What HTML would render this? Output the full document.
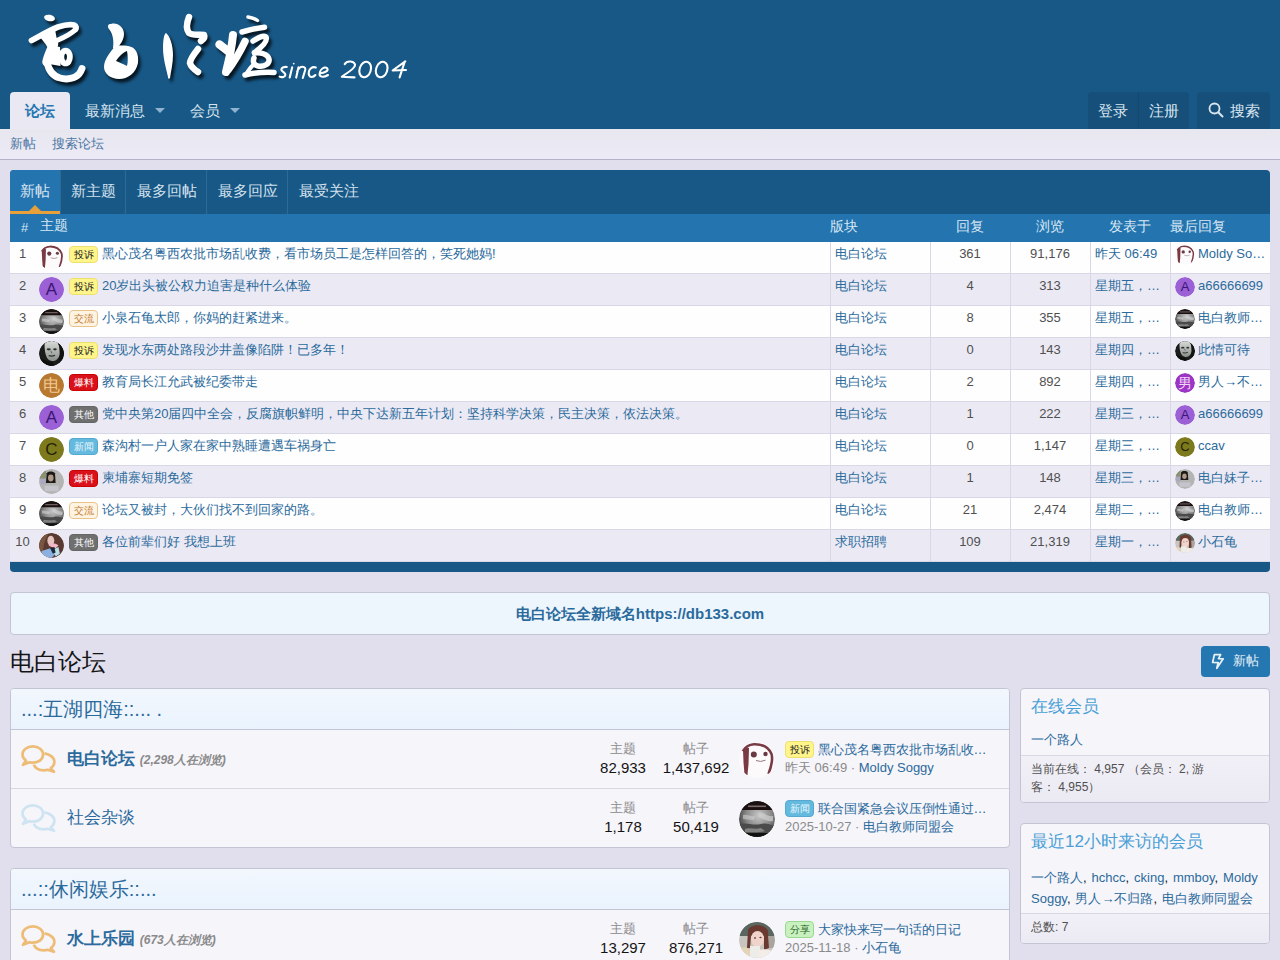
<!DOCTYPE html>
<html><head><meta charset="utf-8"><style>

*{box-sizing:border-box;margin:0;padding:0}
html,body{width:1280px;height:960px;overflow:hidden}
body{font-family:"Liberation Sans",sans-serif;background:#e1dfee;color:#141414;font-size:15px;line-height:1.4;position:relative}
a{color:#2b6a9c;text-decoration:none}
.abs{position:absolute}
#hdr{position:absolute;left:0;top:0;width:1280px;height:129px;background:#185886}
#logo{position:absolute;left:0;top:0}
.navtab{position:absolute;top:92px;height:37px;line-height:37px;font-size:15px;color:#d5e4f0}
.navtab.sel{background:#e9e8f3;color:#2577b1;font-weight:bold;border-radius:4px 4px 0 0}
.caret{display:inline-block;width:0;height:0;border-left:5px solid transparent;border-right:5px solid transparent;border-top:5px solid #8fb3d1;vertical-align:middle;margin-left:10px;position:relative;top:-2px}
.navbtn{position:absolute;top:92px;height:37px;line-height:37px;background:#164f7a;color:#d9e6f0;font-size:15px;text-align:center;border-radius:4px 4px 0 0}
#subnav{position:absolute;left:0;top:129px;width:1280px;height:31px;background:linear-gradient(#e8e7ef,#eceaf6);border-bottom:1px solid #b4b2c6}
#subnav a{position:absolute;top:6px;font-size:13px;color:#4a76a2}
/* block tabs */
#bt{position:absolute;left:10px;top:170px;width:1260px;height:402px;background:#185886;border-radius:4px}
.btab{position:absolute;top:0;height:44px;line-height:42px;font-size:15px;color:#d5e2ee;border-right:1px solid #2d6a96}
.btab.sel{background:#2474b0;border-radius:4px 0 0 0}
#thead{position:absolute;left:0;top:44px;width:1260px;height:28px;background:#2474b0;color:#d9e8f3;font-size:14px}
#thead span{position:absolute;top:2px}
.row{position:absolute;left:0;width:1260px;height:32px;font-size:13px;border-bottom:1px solid #d8d7e6}
.row.w{background:#fefefe}
.row.g{background:#ebeaf4}
.row .c{position:absolute;top:0;height:31px;border-left:1px solid #d8d7e6}
.num{position:absolute;left:0;width:25px;text-align:center;top:3px;color:#505050;font-size:13px}
.av{position:absolute;left:29px;top:3px;width:25px;height:25px;border-radius:50%;overflow:hidden;text-align:center;line-height:24px;font-size:16px}
.lbl{position:absolute;left:59px;top:4px;height:17px;line-height:15px;width:29px;text-align:center;font-size:10px;font-weight:500;border-radius:4px;border:1px solid transparent}
.ttl{position:absolute;left:92px;top:3px;color:#2b6a9c;font-size:13px;white-space:nowrap}
.forum{position:absolute;left:825px;top:3px;width:95px}
.rep{position:absolute;left:920px;width:80px;text-align:center;top:3px;color:#505050}
.vw{position:absolute;left:1000px;width:80px;text-align:center;top:3px;color:#505050}
.dt{position:absolute;left:1085px;top:3px;color:#2b6a9c}
.lr{position:absolute;left:1165px;top:4px;width:96px;white-space:nowrap;overflow:hidden}
.lrav{position:absolute;left:1165px;top:3px;width:20px;height:20px;border-radius:50%;overflow:hidden;text-align:center;line-height:20px;font-size:13px}
.lrn{position:absolute;left:1188px;top:3px;color:#2b6a9c;white-space:nowrap}
.y{background:#fff58a;border-color:#eee070;color:#222}
.o{background:#fff4e4;border-color:#e8c48c;color:#c27a2a}
.r{background:#d9111a;border-color:#c00;color:#fff}
.gy{background:#6f6f6f;border-color:#666;color:#fff}
.bl{background:#64b9de;border-color:#55a9d0;color:#e8f6fd}
.gr{background:#c9f1c0;border-color:#9ad88f;color:#1f5e1a}
#notice{position:absolute;left:10px;top:592px;width:1260px;height:43px;background:#edf5fd;border:1px solid #c3c4d4;border-radius:4px;text-align:center;line-height:41px;font-size:15px;font-weight:bold;color:#2b6a9c}
#ptitle{position:absolute;left:10px;top:645px;font-size:24px;color:#141414;line-height:34px}
#newbtn{position:absolute;left:1201px;top:646px;width:69px;height:31px;background:#2577b1;border-radius:4px;color:#e6f0f8;font-size:13px;line-height:31px}
.blk{position:absolute;background:#f6f5fa;border:1px solid #c3c4d4;border-radius:4px;overflow:hidden}
.bhead{position:absolute;left:0;top:0;width:100%;height:41px;background:linear-gradient(#f2f7fd,#eaf3fd);border-bottom:1px solid #c3c4d4;color:#2b6a9c;font-size:20px;line-height:40px;padding-left:10px}
.node{position:absolute;left:0;width:100%;height:59px;border-bottom:1px solid #d8d7e6}
.nname{position:absolute;left:56px;top:18px;font-size:17px;line-height:22px;color:#2b6a9c}
.nname b{font-weight:bold}
.nview{font-size:12px;color:#8a8a8a;font-style:italic;font-weight:bold}
.slab{position:absolute;width:80px;text-align:center;font-size:13px;color:#8a8a8a;top:10px}
.sval{position:absolute;width:90px;text-align:center;font-size:15px;color:#141414;top:27px}
.lpav{position:absolute;left:728px;top:12px;width:36px;height:36px;border-radius:50%;overflow:hidden}
.lpt{position:absolute;left:774px;top:11px;font-size:13px;line-height:18px;white-space:nowrap;color:#2b6a9c}
.lpm{position:absolute;left:774px;top:29px;font-size:13px;line-height:18px;white-space:nowrap;color:#8a8a8a}
.sbh{position:absolute;left:10px;top:6px;font-size:17px;color:#4aa0d6;line-height:24px}

.tri{position:absolute;left:19px;bottom:3px;width:0;height:0;border-left:6px solid transparent;border-right:6px solid transparent;border-bottom:6px solid #e8a13a}
.btab.sel{box-shadow:inset 0 -3px 0 #e8a13a}
.sbf{position:absolute;left:0;width:100%;border-top:1px solid #d8d7e6;background:linear-gradient(#f1f0f7,#ebeaf3);font-size:12px;color:#505050;padding:5px 10px;line-height:17.5px}

.cm{margin-right:1.3px}

</style></head><body>
<div id="hdr">
  <div id="logo"><svg width="420" height="92" viewBox="0 0 420 92" style="position:absolute;left:0;top:0">
<defs><filter id="sh" x="-10%" y="-10%" width="120%" height="130%"><feGaussianBlur stdDeviation="1.6"/></filter>
<g id="lg">
<g fill="#fff">
<ellipse cx="49.5" cy="18" rx="5.5" ry="3.2" transform="rotate(12 49.5 18)"/>
<path d="M111,24 C117,22 124,27 124,34 C124,40 120,45 117,48 L113,48 C114,41 113,34 109,29 C107,26 108,24 111,24Z"/>
<path fill-rule="evenodd" d="M116,45 C110,52 104,60 104,67 C104,74 111,79 119,79 C128,79 136,73 138,63 C139,54 136,47 128,46 C123,45 119,46 116,45Z M116,61 C119,56 124,52 127,51 C128,56 128,62 127,66 C123,64 119,62 116,61Z"/>
<path d="M166,33 C170,36 173,45 173,55 C173,63 171,71 170,78 C169,79 168,79 168,77 C166,68 163,58 163,48 C163,40 164,34 166,33Z"/>
</g>
<g fill="none" stroke="#fff" stroke-linecap="round" stroke-linejoin="round">
<path d="M31.5,40.5 C40,36 50,30 58,27 C64,25 70,24 74,25 C76.5,26 76.5,28 75.5,29.5" stroke-width="5.8"/>
<path d="M75.5,29.5 C72,33 65,37 58,40 C54,42 51,43.5 49,45" stroke-width="5"/>
<path d="M53.5,44 C51.5,50 48,56 47,62" stroke-width="9.5"/>
<ellipse cx="65.6" cy="57" rx="4.3" ry="6.4" stroke-width="5.8"/>
<path d="M40,37 L55,29.5 L57,40 L47,46Z M50,45 L60,47 L60.5,66 L49,64Z" fill="#fff" stroke="none"/>
<path d="M47,62 C48.5,70 53,76 60,78 C67,80 75,78.5 79,74 C80.5,72 81.5,70 82,68.5" stroke-width="7"/>


<path d="M189,17 C187,22 186,29 189,33 C193,36 200,34 204,35 C205,37 204,39 201,41" stroke-width="6.5"/>
<path d="M198,49 C194,54 190,59 190,63 C191,67 195,70 198,72" stroke-width="6.5"/>
<path d="M248,17 C251,17.5 255,18.5 257.5,20.5" stroke-width="3.5"/>
<path d="M242,32 C249,30 257,28 264.5,27.2" stroke-width="5.5"/>
<path d="M219.5,44.5 L228.5,51.5" stroke-width="8.5"/>
<path d="M233,35 C232,46 229,60 226,72" stroke-width="8"/>
<path d="M245,41.5 C240,52 234,62 228,70" stroke-width="7.5"/>
<path d="M253,41 C258,38 263,35 266,37 C268,41 262,47 254.5,52.5" stroke-width="5.5"/>
<path d="M254.5,53 C260,52 268,54 269,59 C270,64 264,67 258,66 C254,65 252.5,62 254,58" stroke-width="5.5"/>
<path d="M253,65 C250,68 248,71 246,74" stroke-width="4"/>
<path d="M245,75 C253,73 263,72 274,72.5" stroke-width="5.5"/>
</g>

</g></defs>
<use href="#lg" x="2.5" y="3.5" opacity="0.75" style="filter:url(#sh) brightness(0)"/>
<use href="#lg"/>
<g fill="none" stroke="#fff" stroke-width="2.1" stroke-linecap="round" stroke-linejoin="round">
<path d="M286.8,67 C285,66.5 281.5,67.5 281.3,69.6 C281.2,71.5 285.5,72.5 285.4,74.8 C285.3,77 282,77.6 279.6,76.6"/>
<path d="M292.2,67.3 L289.7,77.6"/><circle cx="293.7" cy="63.6" r="0.9" fill="#fff" stroke="none"/>
<path d="M298.5,67.3 L296.2,77.6 M297.2,71.5 C298.5,68.5 300.5,66.8 302.5,66.8 C305,66.8 305.6,68.5 305.2,70 L302.8,78"/>
<path d="M315.8,67.5 C314.5,67 312.5,67 311,68.2 C309,70 308.3,73 309.2,75.4 C310,77.6 313.5,77.4 315.4,75"/>
<path d="M320.3,73.2 C323,72.8 327,71.5 327.6,69.8 C327.8,68 326,67.2 324.5,67.6 C321.5,68.5 319.5,71.5 319.6,74.5 C319.8,77 323.5,77.8 328,75"/>
<path d="M344.7,64.1 C346,62 348.5,61.3 350.5,61.5 C353.5,61.8 355.8,63.5 354.8,66 C353.5,69.5 346,73.5 341.8,76.8 C346,77 350,77.2 354.5,77.4"/>
<ellipse cx="365.2" cy="69.5" rx="5.6" ry="8" transform="rotate(18 365.2 69.5)"/>
<ellipse cx="381.7" cy="69.5" rx="5.6" ry="8" transform="rotate(18 381.7 69.5)"/>
<path d="M405.3,61.3 L392.6,70.5 L406,70 M404.8,61.5 L399.6,77.4"/>
</g>
</svg>
</div>
  <div class="navtab sel" style="left:10px;width:60px;text-align:center">论坛</div>
  <div class="navtab" style="left:85px">最新消息<span class="caret"></span></div>
  <div class="navtab" style="left:190px">会员<span class="caret"></span></div>
  <div class="navbtn" style="left:1088px;width:101px"></div><div class="navbtn" style="left:1088px;width:50px;background:none">登录</div><div style="position:absolute;left:1138px;top:92px;width:1px;height:37px;background:#144870"></div>
  <div class="navbtn" style="left:1139px;width:50px;background:none">注册</div>
  <div class="navbtn" style="left:1197px;width:73px"><svg width="16" height="16" viewBox="0 0 16 16" style="position:absolute;left:11px;top:10px"><circle cx="6.5" cy="6.5" r="5" fill="none" stroke="#d9e6f0" stroke-width="1.8"/><path d="M10.2 10.2 L14.5 14.5" stroke="#d9e6f0" stroke-width="2" stroke-linecap="round"/></svg><span style="position:absolute;left:33px">搜索</span></div>
</div>
<div id="subnav"><a style="left:10px">新帖</a><a style="left:52px">搜索论坛</a></div>

<div id="bt">
  <div class="btab sel" style="left:0;width:51px;padding-left:10px">新帖<span class="tri"></span></div>
  <div class="btab" style="left:51px;width:65px;padding-left:10px">新主题</div>
  <div class="btab" style="left:116px;width:81px;padding-left:11px">最多回帖</div>
  <div class="btab" style="left:197px;width:81px;padding-left:11px">最多回应</div>
  <div class="btab" style="left:278px;width:82px;padding-left:11px;border-right:0">最受关注</div>
  <div id="thead"><span style="left:11px;top:5px;font-size:13px">#</span><span style="left:30px">主题</span><span style="left:820px;top:3px">版块</span><span style="left:946px;top:3px">回复</span><span style="left:1026px;top:3px">浏览</span><span style="left:1099px;top:3px">发表于</span><span style="left:1160px;top:3px">最后回复</span></div>
  <div class="row w" style="top:72px">
<div class="num">1</div><div class="av"><svg width="25" height="25" viewBox="0 0 36 36"><circle cx="18" cy="18" r="18" fill="#fcfafb"/>
<path d="M3.5,9 C6,5 10,2.5 15,2.2 C22,2 29,4 32.5,12 C34,17 32.5,24 29.5,32" fill="none" stroke="#7a3a44" stroke-width="2.6"/>
<path d="M4,8 C6,5 9,5 10,6 L9.5,22 L8.5,33 L5.5,33 L4.5,20Z" fill="#7a3a44"/>
<circle cx="14.8" cy="12.4" r="3" fill="#6a3a42"/><circle cx="26.5" cy="12" r="2.2" fill="#6a3a42"/>
<path d="M17,18.5 Q21.5,20.5 26.5,18.2" fill="none" stroke="#8a6a6e" stroke-width="0.9"/></svg></div><span class="lbl y">投诉</span><a class="ttl" style="left:92px">黑心茂名粤西农批市场乱收费，看市场员工是怎样回答的，笑死她妈!</a>
<div class="c" style="left:820px;width:100px"></div><div class="c" style="left:920px;width:80px"></div><div class="c" style="left:1000px;width:80px"></div><div class="c" style="left:1080px;width:80px"></div><div class="c" style="left:1160px;width:100px"></div>
<a class="forum">电白论坛</a><div class="rep">361</div><div class="vw">91,176</div><a class="dt">昨天 06:49</a>
<div class="lrav"><svg width="20" height="20" viewBox="0 0 36 36"><circle cx="18" cy="18" r="18" fill="#fcfafb"/>
<path d="M3.5,9 C6,5 10,2.5 15,2.2 C22,2 29,4 32.5,12 C34,17 32.5,24 29.5,32" fill="none" stroke="#7a3a44" stroke-width="2.6"/>
<path d="M4,8 C6,5 9,5 10,6 L9.5,22 L8.5,33 L5.5,33 L4.5,20Z" fill="#7a3a44"/>
<circle cx="14.8" cy="12.4" r="3" fill="#6a3a42"/><circle cx="26.5" cy="12" r="2.2" fill="#6a3a42"/>
<path d="M17,18.5 Q21.5,20.5 26.5,18.2" fill="none" stroke="#8a6a6e" stroke-width="0.9"/></svg></div><a class="lrn">Moldy So…</a>
</div>
<div class="row g" style="top:104px">
<div class="num">2</div><div class="av"><div style="width:25px;height:25px;border-radius:50%;background:#9b5fd6;color:#3a1670;text-align:center;line-height:25px;font-size:17px">A</div></div><span class="lbl y">投诉</span><a class="ttl" style="left:92px">20岁出头被公权力迫害是种什么体验</a>
<div class="c" style="left:820px;width:100px"></div><div class="c" style="left:920px;width:80px"></div><div class="c" style="left:1000px;width:80px"></div><div class="c" style="left:1080px;width:80px"></div><div class="c" style="left:1160px;width:100px"></div>
<a class="forum">电白论坛</a><div class="rep">4</div><div class="vw">313</div><a class="dt">星期五，…</a>
<div class="lrav"><div style="width:20px;height:20px;border-radius:50%;background:#9b5fd6;color:#3a1670;text-align:center;line-height:20px;font-size:13px">A</div></div><a class="lrn">a66666699</a>
</div>
<div class="row w" style="top:136px">
<div class="num">3</div><div class="av"><svg width="25" height="25" viewBox="0 0 36 36"><defs><clipPath id="cb25"><circle cx="18" cy="18" r="18"/></clipPath><radialGradient id="gb25" cx="0.55" cy="0.4" r="0.6"><stop offset="0" stop-color="#c8c8c8"/><stop offset="0.6" stop-color="#888"/><stop offset="1" stop-color="#404040"/></radialGradient></defs><g clip-path="url(#cb25)"><rect width="36" height="36" fill="url(#gb25)"/>
<rect y="0" width="36" height="9" fill="#1a1010"/><rect x="9" y="4.5" width="18" height="1.6" fill="#7a6a6a"/>
<path d="M0,23 C8,21 14,25 22,23 C28,21 32,25 36,24 L36,36 L0,36Z" fill="#4a4a4a"/><path d="M6,28 C10,26 16,29 22,27 L26,30 C20,32 12,31 6,31Z" fill="#9a9a9a" opacity="0.7"/>
<path d="M20,11 C26,12 28,16 34,15 L34,20 C28,21 24,18 20,16Z" fill="#d0d0d0" opacity="0.7"/>
<path d="M4,14 C8,13 12,16 16,15 L15,19 C11,19 7,18 4,18Z" fill="#cfcfcf" opacity="0.6"/>
<rect y="32" width="36" height="4" fill="#111"/></g></svg></div><span class="lbl o">交流</span><a class="ttl" style="left:92px">小泉石龟太郎，你妈的赶紧进来。</a>
<div class="c" style="left:820px;width:100px"></div><div class="c" style="left:920px;width:80px"></div><div class="c" style="left:1000px;width:80px"></div><div class="c" style="left:1080px;width:80px"></div><div class="c" style="left:1160px;width:100px"></div>
<a class="forum">电白论坛</a><div class="rep">8</div><div class="vw">355</div><a class="dt">星期五，…</a>
<div class="lrav"><svg width="20" height="20" viewBox="0 0 36 36"><defs><clipPath id="cb20"><circle cx="18" cy="18" r="18"/></clipPath><radialGradient id="gb20" cx="0.55" cy="0.4" r="0.6"><stop offset="0" stop-color="#c8c8c8"/><stop offset="0.6" stop-color="#888"/><stop offset="1" stop-color="#404040"/></radialGradient></defs><g clip-path="url(#cb20)"><rect width="36" height="36" fill="url(#gb20)"/>
<rect y="0" width="36" height="9" fill="#1a1010"/><rect x="9" y="4.5" width="18" height="1.6" fill="#7a6a6a"/>
<path d="M0,23 C8,21 14,25 22,23 C28,21 32,25 36,24 L36,36 L0,36Z" fill="#4a4a4a"/><path d="M6,28 C10,26 16,29 22,27 L26,30 C20,32 12,31 6,31Z" fill="#9a9a9a" opacity="0.7"/>
<path d="M20,11 C26,12 28,16 34,15 L34,20 C28,21 24,18 20,16Z" fill="#d0d0d0" opacity="0.7"/>
<path d="M4,14 C8,13 12,16 16,15 L15,19 C11,19 7,18 4,18Z" fill="#cfcfcf" opacity="0.6"/>
<rect y="32" width="36" height="4" fill="#111"/></g></svg></div><a class="lrn">电白教师…</a>
</div>
<div class="row g" style="top:168px">
<div class="num">4</div><div class="av"><svg width="25" height="25" viewBox="0 0 36 36"><defs><clipPath id="cm25"><circle cx="18" cy="18" r="18"/></clipPath><linearGradient id="gm25" x1="0" y1="0" x2="0" y2="1"><stop offset="0" stop-color="#d8dcd8"/><stop offset="1" stop-color="#8a8e8a"/></linearGradient></defs><g clip-path="url(#cm25)"><rect width="36" height="36" fill="#191c1a"/>
<path d="M8,5 C10,-1 27,-2 29,5 L30,19 C28,27 22,30 17,28.5 C12,27 8,21 8,5Z" fill="url(#gm25)"/>
<ellipse cx="14" cy="12" rx="3" ry="1.6" fill="#2a302c"/><ellipse cx="23" cy="12" rx="2.6" ry="1.5" fill="#2a302c"/>
<path d="M17,14 L18.5,17.5" stroke="#5a605c" stroke-width="1.4"/><path d="M14,21 Q19,22.5 23,20.5" fill="none" stroke="#2a302c" stroke-width="1.8"/>
<path d="M27,4 C31,8 31,20 28,28 L36,30 L36,0Z" fill="#121412"/><path d="M0,36 L0,24 C6,26 12,30 18,30 L24,36Z" fill="#0e100e"/></g></svg></div><span class="lbl y">投诉</span><a class="ttl" style="left:92px">发现水东两处路段沙井盖像陷阱！已多年！</a>
<div class="c" style="left:820px;width:100px"></div><div class="c" style="left:920px;width:80px"></div><div class="c" style="left:1000px;width:80px"></div><div class="c" style="left:1080px;width:80px"></div><div class="c" style="left:1160px;width:100px"></div>
<a class="forum">电白论坛</a><div class="rep">0</div><div class="vw">143</div><a class="dt">星期四，…</a>
<div class="lrav"><svg width="20" height="20" viewBox="0 0 36 36"><defs><clipPath id="cm20"><circle cx="18" cy="18" r="18"/></clipPath><linearGradient id="gm20" x1="0" y1="0" x2="0" y2="1"><stop offset="0" stop-color="#d8dcd8"/><stop offset="1" stop-color="#8a8e8a"/></linearGradient></defs><g clip-path="url(#cm20)"><rect width="36" height="36" fill="#191c1a"/>
<path d="M8,5 C10,-1 27,-2 29,5 L30,19 C28,27 22,30 17,28.5 C12,27 8,21 8,5Z" fill="url(#gm20)"/>
<ellipse cx="14" cy="12" rx="3" ry="1.6" fill="#2a302c"/><ellipse cx="23" cy="12" rx="2.6" ry="1.5" fill="#2a302c"/>
<path d="M17,14 L18.5,17.5" stroke="#5a605c" stroke-width="1.4"/><path d="M14,21 Q19,22.5 23,20.5" fill="none" stroke="#2a302c" stroke-width="1.8"/>
<path d="M27,4 C31,8 31,20 28,28 L36,30 L36,0Z" fill="#121412"/><path d="M0,36 L0,24 C6,26 12,30 18,30 L24,36Z" fill="#0e100e"/></g></svg></div><a class="lrn">此情可待</a>
</div>
<div class="row w" style="top:200px">
<div class="num">5</div><div class="av"><div style="width:25px;height:25px;border-radius:50%;background:#b8782f;color:#f0c890;text-align:center;line-height:25px;font-size:17px">电</div></div><span class="lbl r">爆料</span><a class="ttl" style="left:92px">教育局长江允武被纪委带走</a>
<div class="c" style="left:820px;width:100px"></div><div class="c" style="left:920px;width:80px"></div><div class="c" style="left:1000px;width:80px"></div><div class="c" style="left:1080px;width:80px"></div><div class="c" style="left:1160px;width:100px"></div>
<a class="forum">电白论坛</a><div class="rep">2</div><div class="vw">892</div><a class="dt">星期四，…</a>
<div class="lrav"><div style="width:20px;height:20px;border-radius:50%;background:#9c34c4;color:#f2d6f8;text-align:center;line-height:20px;font-size:14px">男</div></div><a class="lrn">男人→不…</a>
</div>
<div class="row g" style="top:232px">
<div class="num">6</div><div class="av"><div style="width:25px;height:25px;border-radius:50%;background:#9b5fd6;color:#3a1670;text-align:center;line-height:25px;font-size:17px">A</div></div><span class="lbl gy">其他</span><a class="ttl" style="left:92px">党中央第20届四中全会，反腐旗帜鲜明，中央下达新五年计划：坚持科学决策，民主决策，依法决策。</a>
<div class="c" style="left:820px;width:100px"></div><div class="c" style="left:920px;width:80px"></div><div class="c" style="left:1000px;width:80px"></div><div class="c" style="left:1080px;width:80px"></div><div class="c" style="left:1160px;width:100px"></div>
<a class="forum">电白论坛</a><div class="rep">1</div><div class="vw">222</div><a class="dt">星期三，…</a>
<div class="lrav"><div style="width:20px;height:20px;border-radius:50%;background:#9b5fd6;color:#3a1670;text-align:center;line-height:20px;font-size:13px">A</div></div><a class="lrn">a66666699</a>
</div>
<div class="row w" style="top:264px">
<div class="num">7</div><div class="av"><div style="width:25px;height:25px;border-radius:50%;background:#7d7a1e;color:#262208;text-align:center;line-height:25px;font-size:17px">C</div></div><span class="lbl bl">新闻</span><a class="ttl" style="left:92px">森沟村一户人家在家中熟睡遭遇车祸身亡</a>
<div class="c" style="left:820px;width:100px"></div><div class="c" style="left:920px;width:80px"></div><div class="c" style="left:1000px;width:80px"></div><div class="c" style="left:1080px;width:80px"></div><div class="c" style="left:1160px;width:100px"></div>
<a class="forum">电白论坛</a><div class="rep">0</div><div class="vw">1,147</div><a class="dt">星期三，…</a>
<div class="lrav"><div style="width:20px;height:20px;border-radius:50%;background:#7d7a1e;color:#262208;text-align:center;line-height:20px;font-size:13px">C</div></div><a class="lrn">ccav</a>
</div>
<div class="row g" style="top:296px">
<div class="num">8</div><div class="av"><svg width="25" height="25" viewBox="0 0 36 36"><defs><clipPath id="cg25"><circle cx="18" cy="18" r="18"/></clipPath></defs><g clip-path="url(#cg25)"><rect width="36" height="36" fill="#b4b4b2"/>
<rect x="0" y="0" width="10" height="14" fill="#8a9070"/><rect x="2" y="14" width="8" height="8" fill="#a8a8c0"/>
<path d="M11,6 C13,3 21,3 23,6 L24,20 L10,20Z" fill="#1e1a18"/><ellipse cx="17" cy="13" rx="4" ry="5" fill="#b09a88"/>
<rect x="8" y="24" width="20" height="8" fill="#c4c4cc"/></g></svg></div><span class="lbl r">爆料</span><a class="ttl" style="left:92px">柬埔寨短期免签</a>
<div class="c" style="left:820px;width:100px"></div><div class="c" style="left:920px;width:80px"></div><div class="c" style="left:1000px;width:80px"></div><div class="c" style="left:1080px;width:80px"></div><div class="c" style="left:1160px;width:100px"></div>
<a class="forum">电白论坛</a><div class="rep">1</div><div class="vw">148</div><a class="dt">星期三，…</a>
<div class="lrav"><svg width="20" height="20" viewBox="0 0 36 36"><defs><clipPath id="cg20"><circle cx="18" cy="18" r="18"/></clipPath></defs><g clip-path="url(#cg20)"><rect width="36" height="36" fill="#b4b4b2"/>
<rect x="0" y="0" width="10" height="14" fill="#8a9070"/><rect x="2" y="14" width="8" height="8" fill="#a8a8c0"/>
<path d="M11,6 C13,3 21,3 23,6 L24,20 L10,20Z" fill="#1e1a18"/><ellipse cx="17" cy="13" rx="4" ry="5" fill="#b09a88"/>
<rect x="8" y="24" width="20" height="8" fill="#c4c4cc"/></g></svg></div><a class="lrn">电白妹子…</a>
</div>
<div class="row w" style="top:328px">
<div class="num">9</div><div class="av"><svg width="25" height="25" viewBox="0 0 36 36"><defs><clipPath id="cb25"><circle cx="18" cy="18" r="18"/></clipPath><radialGradient id="gb25" cx="0.55" cy="0.4" r="0.6"><stop offset="0" stop-color="#c8c8c8"/><stop offset="0.6" stop-color="#888"/><stop offset="1" stop-color="#404040"/></radialGradient></defs><g clip-path="url(#cb25)"><rect width="36" height="36" fill="url(#gb25)"/>
<rect y="0" width="36" height="9" fill="#1a1010"/><rect x="9" y="4.5" width="18" height="1.6" fill="#7a6a6a"/>
<path d="M0,23 C8,21 14,25 22,23 C28,21 32,25 36,24 L36,36 L0,36Z" fill="#4a4a4a"/><path d="M6,28 C10,26 16,29 22,27 L26,30 C20,32 12,31 6,31Z" fill="#9a9a9a" opacity="0.7"/>
<path d="M20,11 C26,12 28,16 34,15 L34,20 C28,21 24,18 20,16Z" fill="#d0d0d0" opacity="0.7"/>
<path d="M4,14 C8,13 12,16 16,15 L15,19 C11,19 7,18 4,18Z" fill="#cfcfcf" opacity="0.6"/>
<rect y="32" width="36" height="4" fill="#111"/></g></svg></div><span class="lbl o">交流</span><a class="ttl" style="left:92px">论坛又被封，大伙们找不到回家的路。</a>
<div class="c" style="left:820px;width:100px"></div><div class="c" style="left:920px;width:80px"></div><div class="c" style="left:1000px;width:80px"></div><div class="c" style="left:1080px;width:80px"></div><div class="c" style="left:1160px;width:100px"></div>
<a class="forum">电白论坛</a><div class="rep">21</div><div class="vw">2,474</div><a class="dt">星期二，…</a>
<div class="lrav"><svg width="20" height="20" viewBox="0 0 36 36"><defs><clipPath id="cb20"><circle cx="18" cy="18" r="18"/></clipPath><radialGradient id="gb20" cx="0.55" cy="0.4" r="0.6"><stop offset="0" stop-color="#c8c8c8"/><stop offset="0.6" stop-color="#888"/><stop offset="1" stop-color="#404040"/></radialGradient></defs><g clip-path="url(#cb20)"><rect width="36" height="36" fill="url(#gb20)"/>
<rect y="0" width="36" height="9" fill="#1a1010"/><rect x="9" y="4.5" width="18" height="1.6" fill="#7a6a6a"/>
<path d="M0,23 C8,21 14,25 22,23 C28,21 32,25 36,24 L36,36 L0,36Z" fill="#4a4a4a"/><path d="M6,28 C10,26 16,29 22,27 L26,30 C20,32 12,31 6,31Z" fill="#9a9a9a" opacity="0.7"/>
<path d="M20,11 C26,12 28,16 34,15 L34,20 C28,21 24,18 20,16Z" fill="#d0d0d0" opacity="0.7"/>
<path d="M4,14 C8,13 12,16 16,15 L15,19 C11,19 7,18 4,18Z" fill="#cfcfcf" opacity="0.6"/>
<rect y="32" width="36" height="4" fill="#111"/></g></svg></div><a class="lrn">电白教师…</a>
</div>
<div class="row g" style="top:360px">
<div class="num">10</div><div class="av"><svg width="25" height="25" viewBox="0 0 36 36"><defs><clipPath id="cl25"><circle cx="18" cy="18" r="18"/></clipPath></defs><g clip-path="url(#cl25)"><rect width="36" height="36" fill="#5a3a30"/>
<path d="M0,0 L14,0 C10,8 6,16 6,26 L0,30Z" fill="#7a5640"/><ellipse cx="17" cy="11" rx="5" ry="7" fill="#e8c4c0"/>
<path d="M14,16 C18,14 24,14 28,18 L24,22 C20,20 16,20 14,18Z" fill="#f0b8c8"/>
<path d="M4,26 L16,22 L24,30 L18,36 L4,36Z" fill="#8ab0e0"/><path d="M20,24 L28,20 L30,30 L24,34Z" fill="#b8e0e8"/><path d="M16,22 L22,20 L24,28 L20,30Z" fill="#1a2a3a"/></g></svg></div><span class="lbl gy">其他</span><a class="ttl" style="left:92px">各位前辈们好 我想上班</a>
<div class="c" style="left:820px;width:100px"></div><div class="c" style="left:920px;width:80px"></div><div class="c" style="left:1000px;width:80px"></div><div class="c" style="left:1080px;width:80px"></div><div class="c" style="left:1160px;width:100px"></div>
<a class="forum">求职招聘</a><div class="rep">109</div><div class="vw">21,319</div><a class="dt">星期一，…</a>
<div class="lrav"><svg width="20" height="20" viewBox="0 0 36 36"><defs><clipPath id="cl220"><circle cx="18" cy="18" r="18"/></clipPath></defs><g clip-path="url(#cl220)"><rect width="36" height="36" fill="#c8c4be"/>
<rect x="0" y="0" width="36" height="14" fill="#5a6660"/><rect x="30" y="14" width="6" height="12" fill="#a8a49e"/>
<path d="M9,8 C11,2 26,1 29,9 L30,26 L25,28 L25,14 C21,10 15,10 12,14 L11,26 L8,26Z" fill="#6a3a30"/>
<ellipse cx="18.5" cy="17" rx="6.5" ry="8" fill="#f0d4cc"/><ellipse cx="16" cy="16" rx="1.2" ry="0.8" fill="#5a3a32"/><ellipse cx="21.5" cy="15.5" rx="1.2" ry="0.8" fill="#5a3a32"/>
<path d="M2,26 C6,24 10,26 12,30 L12,36 L2,36Z" fill="#e4d4b8"/><rect x="11" y="24" width="10" height="12" fill="#ecece8"/><path d="M20,28 C26,26 32,28 36,30 L36,36 L20,36Z" fill="#f4ece6"/></g></svg></div><a class="lrn">小石龟</a>
</div>
</div>

<div id="notice">电白论坛全新域名https://db133.com</div>
<div id="ptitle">电白论坛</div>
<div id="newbtn"><svg width="69" height="31" viewBox="1201 646 69 31" style="position:absolute;left:0;top:0"><path d="M1214.4,654.6 L1220.6,654.6 L1218.6,658.6 L1223.2,658.8 L1216.8,668.2 L1218.2,662.6 L1212.6,662.4Z" fill="none" stroke="#e8f1f8" stroke-width="1.8" stroke-linejoin="round"/></svg><span style="position:absolute;left:32px;top:-1px">新帖</span></div>

<div class="blk" style="left:10px;top:688px;width:1000px;height:160px">
  <div class="bhead">...:五湖四海::... .</div>
  <div class="node" style="top:41px">
    <div style="position:absolute;left:10px;top:15px"><svg width="38" height="30" viewBox="0 0 38 30"><g fill="none" stroke="#edbd78" stroke-width="2.7" stroke-linejoin="round">
<path d="M11.8,1.4 C6,1.4 1.5,4.9 1.5,9.5 C1.5,12 2.8,14 5,15.5 L2,19.8 L8.5,17.2 C9.6,17.5 10.7,17.7 11.8,17.7 C17.6,17.7 22.1,14.2 22.1,9.5 C22.1,4.9 17.6,1.4 11.8,1.4Z"/>
<path d="M23.5,8.4 C29,9.3 33.4,12.6 33.4,17 C33.4,19.5 32,21.5 29.8,23 L33,26.8 L26.6,24.8 C25.5,25.1 24.3,25.3 23,25.3 C18,25.3 14,23 12.8,19.6"/>
</g></svg></div>
    <div class="nname"><b>电白论坛</b> <span class="nview">(2,298人在浏览)</span></div>
    <div class="slab" style="left:572px">主题</div><div class="sval" style="left:567px">82,933</div>
    <div class="slab" style="left:645px">帖子</div><div class="sval" style="left:640px">1,437,692</div>
    <div class="lpav"><svg width="36" height="36" viewBox="0 0 36 36"><circle cx="18" cy="18" r="18" fill="#fcfafb"/>
<path d="M3.5,9 C6,5 10,2.5 15,2.2 C22,2 29,4 32.5,12 C34,17 32.5,24 29.5,32" fill="none" stroke="#7a3a44" stroke-width="2.6"/>
<path d="M4,8 C6,5 9,5 10,6 L9.5,22 L8.5,33 L5.5,33 L4.5,20Z" fill="#7a3a44"/>
<circle cx="14.8" cy="12.4" r="3" fill="#6a3a42"/><circle cx="26.5" cy="12" r="2.2" fill="#6a3a42"/>
<path d="M17,18.5 Q21.5,20.5 26.5,18.2" fill="none" stroke="#8a6a6e" stroke-width="0.9"/></svg></div>
    <div class="lpt"><span class="lbl y" style="position:static;display:inline-block;vertical-align:1px">投诉</span> 黑心茂名粤西农批市场乱收…</div>
    <div class="lpm">昨天 06:49 · <a>Moldy Soggy</a></div>
  </div>
  <div class="node" style="top:100px;border-bottom:0">
    <div style="position:absolute;left:10px;top:15px"><svg width="38" height="30" viewBox="0 0 38 30"><g fill="none" stroke="#cfe4f2" stroke-width="2.7" stroke-linejoin="round">
<path d="M11.8,1.4 C6,1.4 1.5,4.9 1.5,9.5 C1.5,12 2.8,14 5,15.5 L2,19.8 L8.5,17.2 C9.6,17.5 10.7,17.7 11.8,17.7 C17.6,17.7 22.1,14.2 22.1,9.5 C22.1,4.9 17.6,1.4 11.8,1.4Z"/>
<path d="M23.5,8.4 C29,9.3 33.4,12.6 33.4,17 C33.4,19.5 32,21.5 29.8,23 L33,26.8 L26.6,24.8 C25.5,25.1 24.3,25.3 23,25.3 C18,25.3 14,23 12.8,19.6"/>
</g></svg></div>
    <div class="nname">社会杂谈</div>
    <div class="slab" style="left:572px">主题</div><div class="sval" style="left:567px">1,178</div>
    <div class="slab" style="left:645px">帖子</div><div class="sval" style="left:640px">50,419</div>
    <div class="lpav"><svg width="36" height="36" viewBox="0 0 36 36"><defs><clipPath id="cb36"><circle cx="18" cy="18" r="18"/></clipPath><radialGradient id="gb36" cx="0.55" cy="0.4" r="0.6"><stop offset="0" stop-color="#c8c8c8"/><stop offset="0.6" stop-color="#888"/><stop offset="1" stop-color="#404040"/></radialGradient></defs><g clip-path="url(#cb36)"><rect width="36" height="36" fill="url(#gb36)"/>
<rect y="0" width="36" height="9" fill="#1a1010"/><rect x="9" y="4.5" width="18" height="1.6" fill="#7a6a6a"/>
<path d="M0,23 C8,21 14,25 22,23 C28,21 32,25 36,24 L36,36 L0,36Z" fill="#4a4a4a"/><path d="M6,28 C10,26 16,29 22,27 L26,30 C20,32 12,31 6,31Z" fill="#9a9a9a" opacity="0.7"/>
<path d="M20,11 C26,12 28,16 34,15 L34,20 C28,21 24,18 20,16Z" fill="#d0d0d0" opacity="0.7"/>
<path d="M4,14 C8,13 12,16 16,15 L15,19 C11,19 7,18 4,18Z" fill="#cfcfcf" opacity="0.6"/>
<rect y="32" width="36" height="4" fill="#111"/></g></svg></div>
    <div class="lpt"><span class="lbl bl" style="position:static;display:inline-block;vertical-align:1px">新闻</span> 联合国紧急会议压倒性通过…</div>
    <div class="lpm">2025-10-27 · <a>电白教师同盟会</a></div>
  </div>
</div>

<div class="blk" style="left:10px;top:868px;width:1000px;height:120px">
  <div class="bhead">...::休闲娱乐::...</div>
  <div class="node" style="top:41px">
    <div style="position:absolute;left:10px;top:15px"><svg width="38" height="30" viewBox="0 0 38 30"><g fill="none" stroke="#edbd78" stroke-width="2.7" stroke-linejoin="round">
<path d="M11.8,1.4 C6,1.4 1.5,4.9 1.5,9.5 C1.5,12 2.8,14 5,15.5 L2,19.8 L8.5,17.2 C9.6,17.5 10.7,17.7 11.8,17.7 C17.6,17.7 22.1,14.2 22.1,9.5 C22.1,4.9 17.6,1.4 11.8,1.4Z"/>
<path d="M23.5,8.4 C29,9.3 33.4,12.6 33.4,17 C33.4,19.5 32,21.5 29.8,23 L33,26.8 L26.6,24.8 C25.5,25.1 24.3,25.3 23,25.3 C18,25.3 14,23 12.8,19.6"/>
</g></svg></div>
    <div class="nname"><b>水上乐园</b> <span class="nview">(673人在浏览)</span></div>
    <div class="slab" style="left:572px">主题</div><div class="sval" style="left:567px">13,297</div>
    <div class="slab" style="left:645px">帖子</div><div class="sval" style="left:640px">876,271</div>
    <div class="lpav"><svg width="36" height="36" viewBox="0 0 36 36"><defs><clipPath id="cl236"><circle cx="18" cy="18" r="18"/></clipPath></defs><g clip-path="url(#cl236)"><rect width="36" height="36" fill="#c8c4be"/>
<rect x="0" y="0" width="36" height="14" fill="#5a6660"/><rect x="30" y="14" width="6" height="12" fill="#a8a49e"/>
<path d="M9,8 C11,2 26,1 29,9 L30,26 L25,28 L25,14 C21,10 15,10 12,14 L11,26 L8,26Z" fill="#6a3a30"/>
<ellipse cx="18.5" cy="17" rx="6.5" ry="8" fill="#f0d4cc"/><ellipse cx="16" cy="16" rx="1.2" ry="0.8" fill="#5a3a32"/><ellipse cx="21.5" cy="15.5" rx="1.2" ry="0.8" fill="#5a3a32"/>
<path d="M2,26 C6,24 10,26 12,30 L12,36 L2,36Z" fill="#e4d4b8"/><rect x="11" y="24" width="10" height="12" fill="#ecece8"/><path d="M20,28 C26,26 32,28 36,30 L36,36 L20,36Z" fill="#f4ece6"/></g></svg></div>
    <div class="lpt"><span class="lbl gr" style="position:static;display:inline-block;vertical-align:1px">分享</span> 大家快来写一句话的日记</div>
    <div class="lpm">2025-11-18 · <a>小石龟</a></div>
  </div>
</div>

<div class="blk" style="left:1020px;top:688px;width:250px;height:115px">
  <div class="sbh">在线会员</div>
  <a style="position:absolute;left:10px;top:42px;font-size:13px">一个路人</a>
  <div class="sbf" style="top:66px;height:49px">当前在线： 4,957 （会员： 2, 游<br>客： 4,955）</div>
</div>
<div class="blk" style="left:1020px;top:823px;width:250px;height:121px">
  <div class="sbh">最近12小时来访的会员</div>
  <div style="position:absolute;left:10px;top:43px;font-size:13px;line-height:21px;width:235px;color:#141414"><a>一个路人</a><span class="cm">, </span><a>hchcc</a><span class="cm">, </span><a>cking</a><span class="cm">, </span><a>mmboy</a><span class="cm">, </span><a>Moldy Soggy</a><span class="cm">, </span><a>男人→不归路</a><span class="cm">, </span><a>电白教师同盟会</a></div>
  <div class="sbf" style="top:89px;height:32px">总数: 7</div>
</div>
</body></html>
